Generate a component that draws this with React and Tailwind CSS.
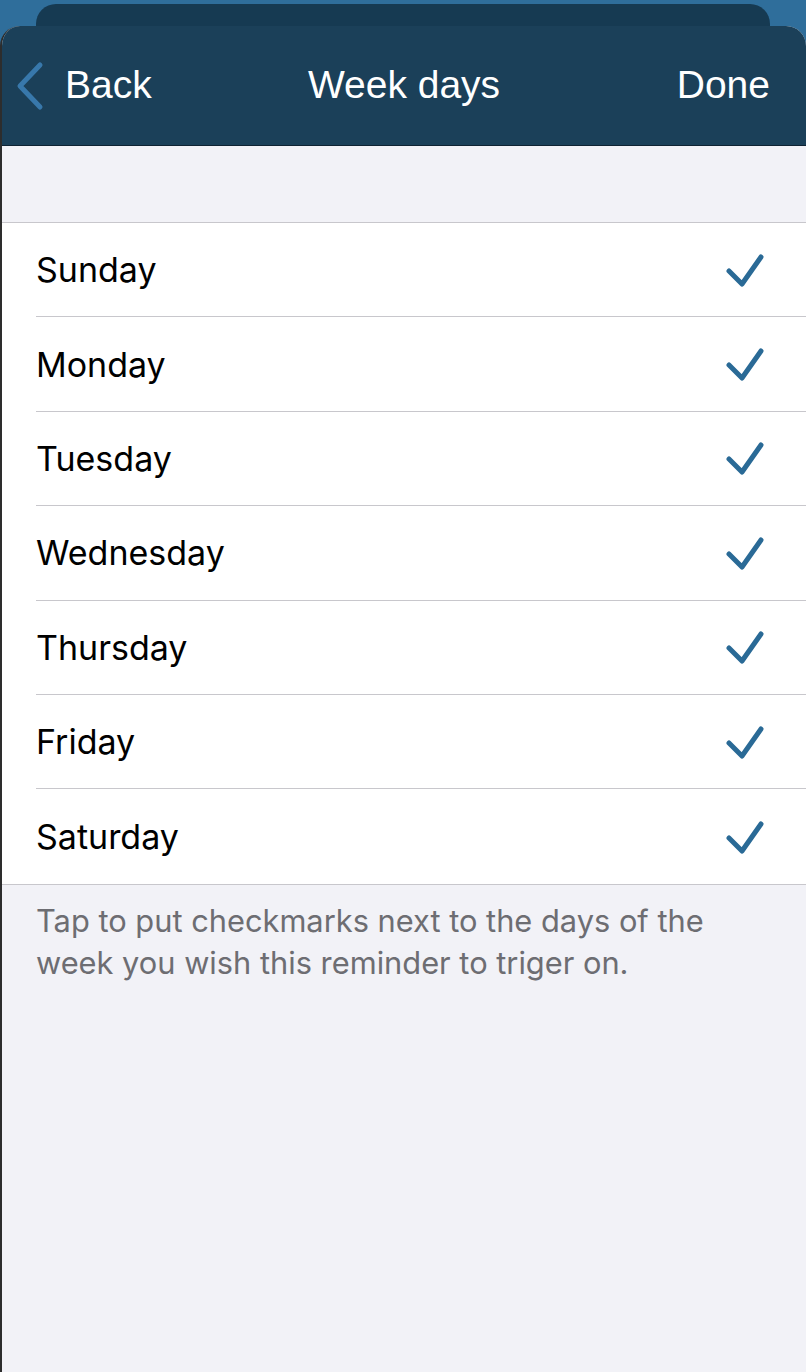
const days = ['Sunday', 'Monday', 'Tuesday', 'Wednesday', 'Thursday', 'Friday', 'Saturday']

const navFont = { fontFamily: '"Liberation Sans", Arial, sans-serif' }

function Check() {
  return (
    <svg width="40" height="36" viewBox="0 0 40 36" fill="none">
      <path d="M4 19 L17 32 L36 5" stroke="#2a6a96" strokeWidth="5" strokeLinecap="round" strokeLinejoin="round" />
    </svg>
  )
}

function Chevron() {
  return (
    <svg width="30" height="50" viewBox="0 0 30 50" fill="none">
      <path d="M25 4 L5 25 L25 46" stroke="#3878ab" strokeWidth="5" strokeLinecap="round" strokeLinejoin="round" />
    </svg>
  )
}

export default function App() {
  return (
    <div className="flex min-h-[1372px] flex-col bg-[#2f6e9b] font-['Inter',sans-serif]">
      <div className="mx-[36px] mt-[4px] h-[22px] rounded-t-[20px] bg-[#163a52]" />

      <div className="flex flex-1 flex-col overflow-hidden rounded-t-[20px] border-l-2 border-[#2d2d2d] bg-[#f2f2f7]">
        <div
          className="grid h-[120px] grid-cols-[1fr_auto_1fr] items-center border-b border-[#0f2333] bg-[#1b4059] text-[39px] text-white"
          style={navFont}
        >
          <div className="flex items-center pl-[13px]">
            <Chevron />
            <span className="ml-[20px]">Back</span>
          </div>
          <div>Week days</div>
          <div className="pr-[36px] text-right">Done</div>
        </div>

        <div className="h-[76px]" />

        <div className="border-y border-[#c8c7cc] bg-white">
          {days.map((day, i) => (
            <div key={day} className="h-[94.4px] pl-[34px]">
              <div
                className={`flex h-full items-center justify-between pr-[41px] ${
                  i < days.length - 1 ? 'border-b border-[#c8c7cc]' : ''
                }`}
              >
                <span className="text-[34px] text-black">{day}</span>
                <Check />
              </div>
            </div>
          ))}
        </div>

        <p className="px-[34px] pt-[15px] text-[30.8px] leading-[42px] text-[#6d6d72]">
          Tap to put checkmarks next to the days of the week you wish this reminder to triger on.
        </p>
      </div>
    </div>
  )
}
